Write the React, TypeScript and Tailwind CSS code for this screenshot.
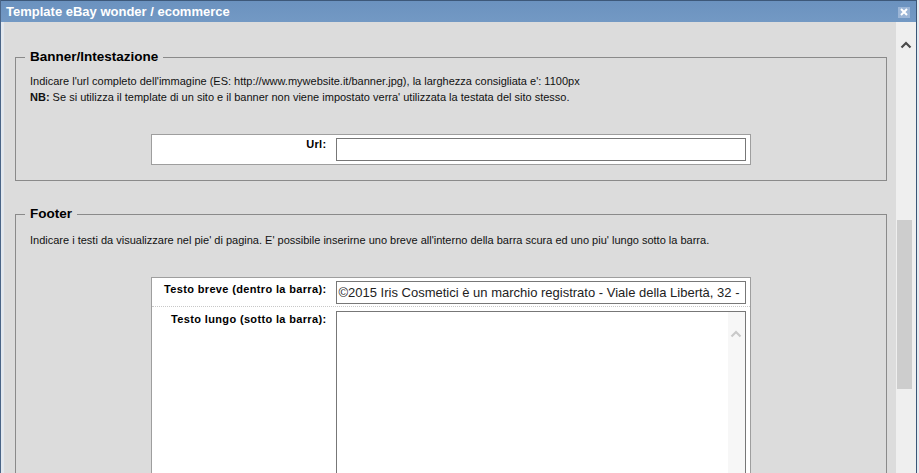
import React from "react";

const font = "font-['Liberation_Sans',Arial,sans-serif]";

function Chevron({ className, color }: { className?: string; color: string }) {
	return (
		<svg className={className} width="12" height="8" viewBox="0 0 12 8">
			<path d="M1.5 6.5 L6 2 L10.5 6.5" fill="none" stroke={color} strokeWidth="2.2" />
		</svg>
	);
}

function FormRow({ label, children, last }: { label: string; children: React.ReactNode; last?: boolean }) {
	return (
		<div className={`flex ${last ? "pt-[4px]" : "pt-[3px] pb-[2px] border-b border-dotted border-[#c8c8c8]"}`}>
			<div className="w-[180px] pr-[5px] pt-[2px] text-right text-[11px] leading-[13px] font-bold tracking-[0.35px] text-black">
				{label}
			</div>
			<div className="pl-[4px]">{children}</div>
		</div>
	);
}

export default function App() {
	return (
		<div className={`w-[919px] h-[473px] overflow-hidden flex bg-[#dfe6ee] ${font}`}>
			<div className="w-[1px] bg-[#4a6587]" />
			<div className="flex-1 flex flex-col">
				<div className="h-[22px] flex items-center justify-between border-t border-[#3d5879] bg-gradient-to-b from-[#6b92bf] to-[#7399c4] pl-[5px] pr-[6px]">
					<span className="text-white text-[13px] font-bold leading-none">Template eBay wonder / ecommerce</span>
					<span className="w-[12px] h-[11px] flex items-center justify-center bg-[#9bb5d6] mt-[1px]">
						<svg width="8" height="8" viewBox="0 0 8 8">
							<path d="M1 1 L7 7 M7 1 L1 7" stroke="white" strokeWidth="2" />
						</svg>
					</span>
				</div>
				<div className="flex-1 flex min-h-0">
					<div className="w-[3px] bg-[#e3e8ee]" />
					<div className="flex-1 bg-[#dcdcdc] pl-[11px] pr-[9px] pt-[27px]">
						<fieldset className="border border-[#8a8a8a] pl-[9px] pb-[15px]">
							<legend className="px-[5px] text-[13.5px] leading-[16px] font-bold text-black">Banner/Intestazione</legend>
							<div className="pl-[5px] pt-[8px] text-[11px] leading-[16px] text-[#111]">
								<div>Indicare l'url completo dell'immagine (ES: http://www.mywebsite.it/banner.jpg), la larghezza consigliata e': 1100px</div>
								<div>
									<b>NB:</b> Se si utilizza il template di un sito e il banner non viene impostato verra' utilizzata la testata del sito stesso.
								</div>
							</div>
							<div className="w-[600px] mx-auto mt-[29px] bg-white border border-[#9e9e9e] -translate-x-[5px]">
								<div className="flex pt-[3px] pb-[3px]">
									<div className="w-[180px] pr-[5px] text-right text-[11px] leading-[13px] font-bold tracking-[0.35px] text-black">Url:</div>
									<div className="pl-[4px]">
										<div className="w-[410px] h-[23px] border border-[#777]" />
									</div>
								</div>
							</div>
						</fieldset>

						<fieldset className="mt-[25px] border border-[#8a8a8a] pl-[9px] pb-[15px]">
							<legend className="px-[5px] text-[13.5px] leading-[16px] font-bold text-black">Footer</legend>
							<div className="pl-[5px] pt-[10px] text-[11px] leading-[16px] text-[#111]">
								Indicare i testi da visualizzare nel pie' di pagina. E' possibile inserirne uno breve all'interno della barra scura ed uno piu' lungo sotto la barra.
							</div>
							<div className="w-[600px] mx-auto mt-[29px] bg-white border border-[#9e9e9e] -translate-x-[5px]">
								<FormRow label="Testo breve (dentro la barra):">
									<div className="w-[410px] h-[23px] border border-[#777] pl-[2px] flex items-center overflow-hidden whitespace-nowrap text-[13px] text-[#222]">
										©2015 Iris Cosmetici è un marchio registrato - Viale della Libertà, 32 -
									</div>
								</FormRow>
								<FormRow label="Testo lungo (sotto la barra):" last>
									<div className="w-[410px] h-[200px] border border-[#777] flex justify-end">
										<div className="w-[17px] bg-[#f7f7f7] flex justify-center pt-[18px]">
											<Chevron color="#c9c9c9" />
										</div>
									</div>
								</FormRow>
							</div>
						</fieldset>
					</div>
					<div className="w-[20px] bg-[#efefef] relative">
						<div className="flex justify-center pt-[19px]">
							<Chevron color="#4a4a4a" />
						</div>
						<div className="absolute left-[1px] w-[15px] top-[198px] h-[169px] bg-[#cdcdcd]" />
					</div>
				</div>
			</div>
			<div className="w-[1px] bg-[#3a5677]" />
			<div className="w-[2px] bg-[#e6ebf1]" />
		</div>
	);
}
